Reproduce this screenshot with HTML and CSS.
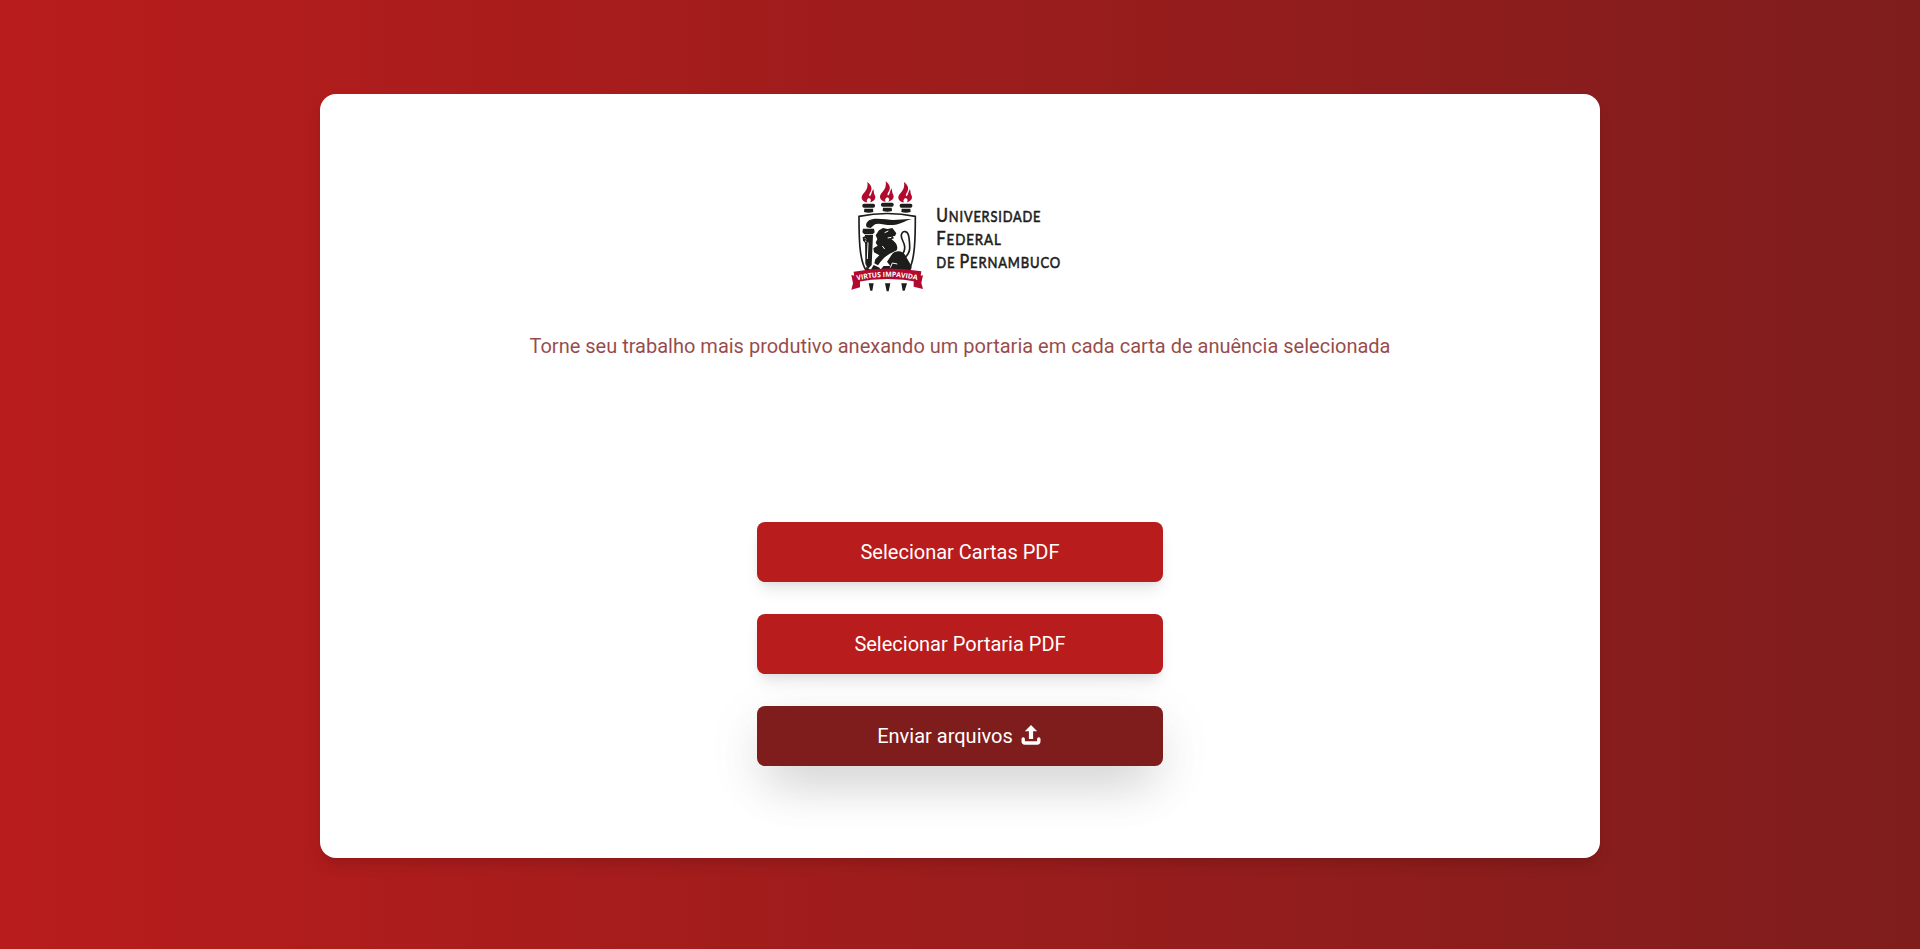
FILE: index.html
```html
<!DOCTYPE html>
<html lang="pt-BR">
<head>
<meta charset="utf-8">
<title>Anexar portaria - UFPE</title>
<link rel="stylesheet" href="styles.css">
</head>
<body>
<main class="card">
  <svg class="logo" viewBox="0 0 720 390" role="img" aria-label="Universidade Federal de Pernambuco">
    <defs>
      <path id="flame" d="M16 0C29 10 31 20 26 29C22 36 20 40 23 43C29 40 28 30 34 21C36 30 35 34 38 39C44 49 36 59 24 61C29 55 27 50 21 48C15 51 12 56 16 61C4 60-4 51 0 41C5 31 20 24 16 0Z"/>
      <g id="torch">
        <rect x="0" y="0" width="38" height="12" rx="5"/>
        <path d="M6 15H32L33 25Q19 29 5 25Z"/>
      </g>
    </defs>
    <g class="crimson">
      <use href="#flame" x="66" y="36"/>
      <use href="#flame" x="121" y="34"/>
      <use href="#flame" x="176" y="36"/>
    </g>
    <g class="ink">
      <use href="#torch" x="67" y="101"/>
      <use href="#torch" x="123" y="98"/>
      <use href="#torch" x="179" y="101"/>
      <path class="outline" d="M57 139Q142 122 226 139C226 195 226 272 205 302H79C57 272 57 195 57 139Z"/>
      <path d="M78 165C82 142 112 145 138 148C170 153 190 145 216 147C198 151 186 161 166 164C136 170 110 151 98 169L92 174L80 172Z"/>
      <path d="M69 176H102L104 187L98 193H73L67 187ZM75 195H99L95 285L84 297L76 281Z"/>
      <path d="M76 198L68 202L69 211L77 222L82 216V203Z"/>
      <path d="M117 181L129 174L143 177L157 174L169 190L165 198L158 199L162 205L154 208C167 216 176 229 170 241L148 252L134 262L121 276L114 286L103 280L106 268L118 256L102 247L100 235L113 227L107 218L112 207L107 196Z"/>
      <path d="M157 251C174 237 193 245 200 263L213 286Q218 296 209 302H134L124 296L131 288H151L141 275L150 262Z"/>
      <path d="M78 290L92 300L101 285L120 294L117 303H79Z"/>
      <path class="tail" d="M190 266C214 251 210 230 207 204C205 181 187 179 184 195C182 207 193 215 194 230C195 244 190 252 180 259"/>
      <path d="M86 340H101L97 362H91ZM135 340H151L146 364H140ZM184 340H201L194 362H188Z"/>
    </g>
    <g class="detail">
      <path d="M134 188L145 183M143 204L154 202M75 205L78 208M75 213L79 214M84 217L82 267M127 228L134 237M172 282L157 279L151 293"/>
    </g>
    <g class="crimson">
      <path d="M34 315L60 321V352L34 359L39 340ZM249 315L221 326V350L249 357L244 339Z"/>
      <path d="M41 305Q143 286 244 304L240 337Q143 317 45 337Z"/>
    </g>
    <path id="motto-line" class="guide" d="M51 331Q143 310 235 331"/>
    <text class="motto"><textPath href="#motto-line" textLength="182" lengthAdjust="spacingAndGlyphs">VIRTUS IMPAVIDA</textPath></text>
    <g class="name">
      <text x="289" y="157" textLength="315" lengthAdjust="spacingAndGlyphs">U<tspan class="small">NIVERSIDADE</tspan></text>
      <text x="289" y="226" textLength="196" lengthAdjust="spacingAndGlyphs">F<tspan class="small">EDERAL</tspan></text>
      <text x="289" y="295" textLength="374" lengthAdjust="spacingAndGlyphs"><tspan class="small">DE </tspan>P<tspan class="small">ERNAMBUCO</tspan></text>
    </g>
  </svg>
  <p class="lead">Torne seu trabalho mais produtivo anexando um portaria em cada carta de anuência selecionada</p>
  <div class="actions">
    <button class="button" type="button">Selecionar Cartas PDF</button>
    <button class="button" type="button">Selecionar Portaria PDF</button>
    <button class="button button-send" type="button">Enviar arquivos
      <svg class="upload" viewBox="0 0 20 20" aria-hidden="true"><path class="arrow" d="M10 0L16.2 6.3H12.1V14H7.9V6.3H3.8Z"/><path class="tray" d="M2.2 14V16.3Q2.2 18 3.9 18H16.1Q17.8 18 17.8 16.3V14"/></svg>
    </button>
  </div>
</main>
</body>
</html>
```
FILE: styles.css
```css
* { box-sizing: border-box; }
body {
  margin: 0;
  height: 949px;
  padding-top: 94px;
  overflow: hidden;
  background: linear-gradient(to right, #b91c1c, #7f1d1d);
  font-family: Roboto, sans-serif;
}
.card {
  display: flex;
  flex-direction: column;
  align-items: center;
  width: 1280px;
  height: 764px;
  margin: 0 auto;
  padding-top: 76px;
  background: #fff;
  border-radius: 16px;
  box-shadow: 0 10px 15px -3px rgba(0, 0, 0, .1), 0 4px 6px -2px rgba(0, 0, 0, .05);
}
.logo { width: 240px; height: 130px; }
.crimson { fill: #b00b2f; }
.ink { fill: #1d1d1b; }
.outline { fill: none; stroke: #1d1d1b; stroke-width: 5; }
.tail { fill: none; stroke: #1d1d1b; stroke-width: 5; }
.detail { fill: none; stroke: #fff; stroke-width: 3; }
.guide { fill: none; }
.motto { fill: #fff; font: 700 21px "Open Sans", sans-serif; }
.name { fill: #1d1d1b; stroke: #1d1d1b; stroke-width: 1.8; font: 400 57px Lato, sans-serif; letter-spacing: 3px; }
.small { font-size: 46px; }
.lead {
  margin: 32px 0 0;
  color: #7f1d1d;
  font-size: 20px;
  line-height: 28px;
  opacity: .8;
}
.actions {
  display: flex;
  flex-direction: column;
  gap: 32px;
  width: 406px;
  margin-top: 162px;
}
.button {
  display: flex;
  align-items: center;
  justify-content: center;
  gap: 8px;
  height: 60px;
  padding: 0;
  border: 0;
  border-radius: 8px;
  background: #b91c1c;
  color: #fff;
  font: 400 20px/28px Roboto, sans-serif;
  box-shadow: 0 10px 15px -3px rgba(0, 0, 0, .1), 0 4px 6px -2px rgba(0, 0, 0, .05);
}
.button-send {
  padding-right: 2px;
  background: #7f1d1d;
  box-shadow: 0 25px 50px -12px rgba(0, 0, 0, .17), 0 15px 60px rgba(0, 0, 0, .08);
}
.upload {
  width: 20px;
  height: 20px;
  margin-bottom: 2px;
}
.arrow { fill: #fff; }
.tray {
  fill: none;
  stroke: #fff;
  stroke-width: 3.4;
  stroke-linecap: round;
  stroke-linejoin: round;
}
```
